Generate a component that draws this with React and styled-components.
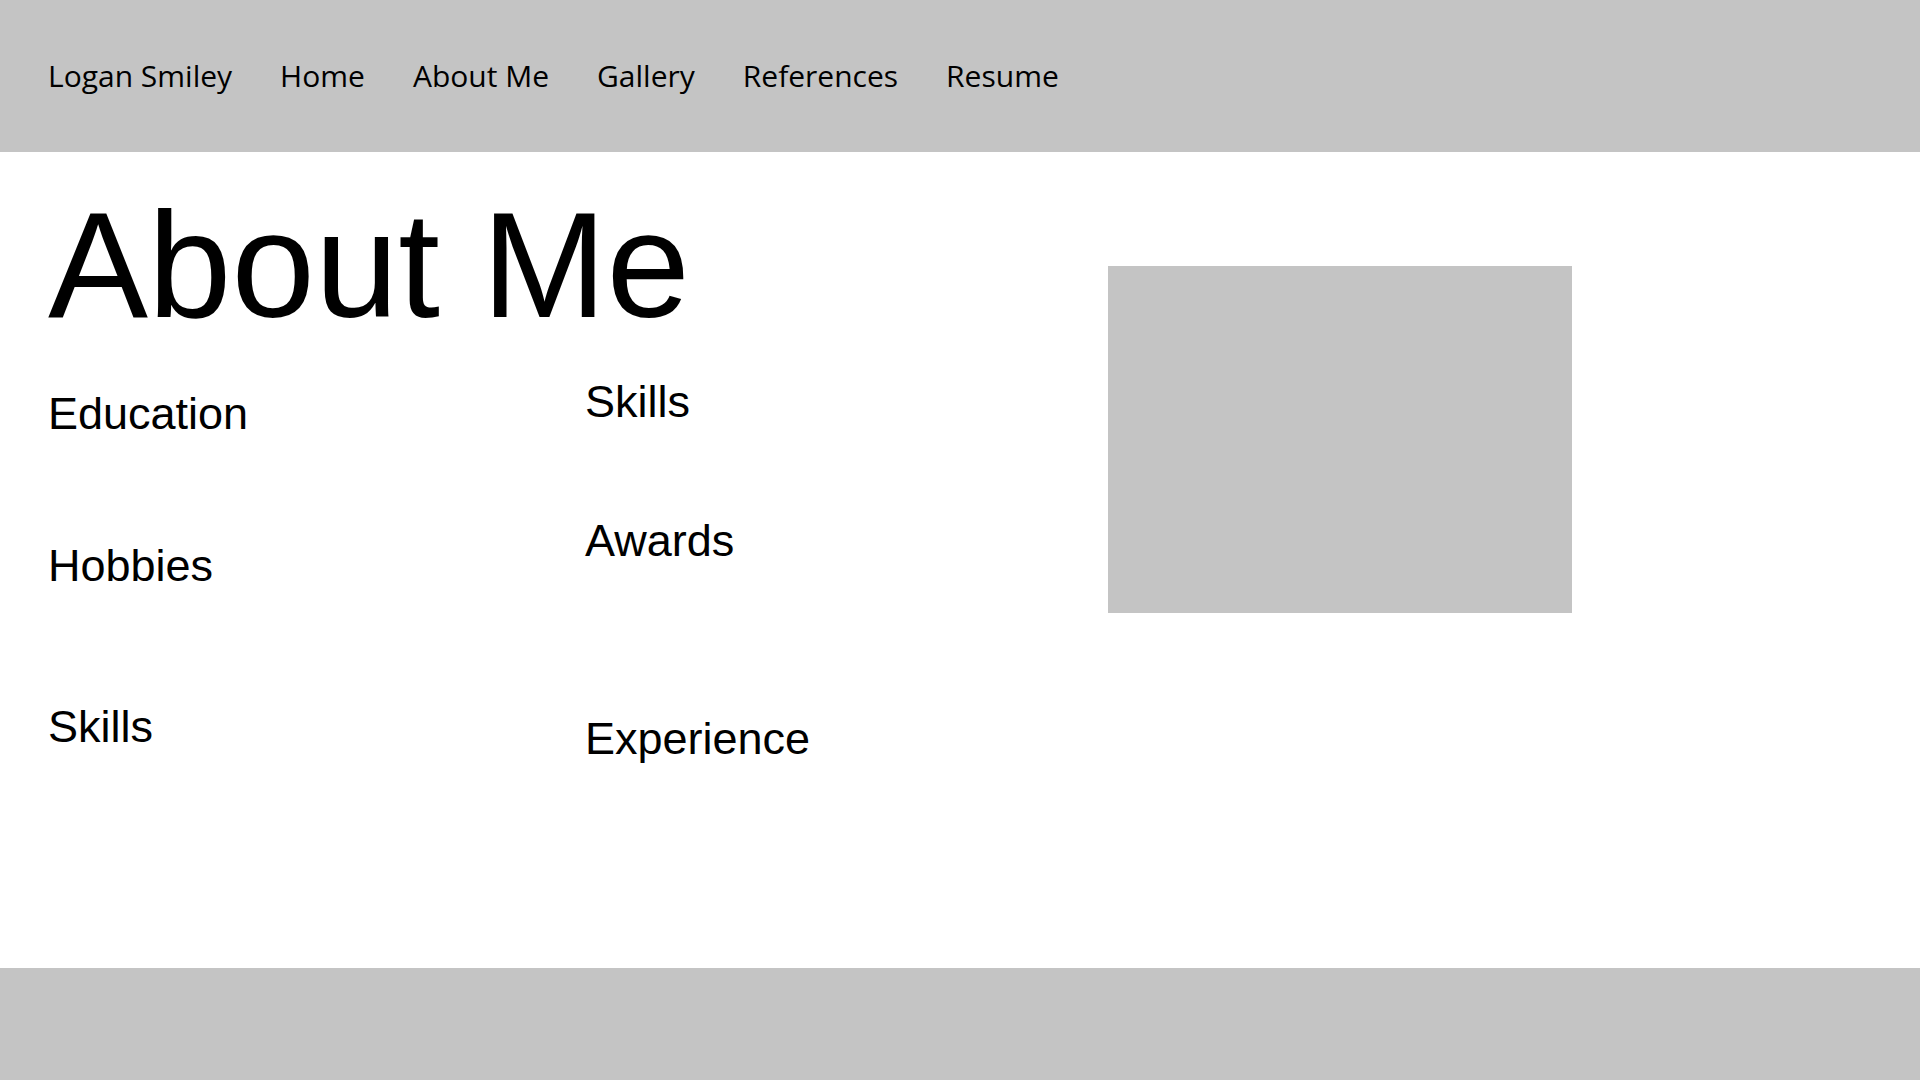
import React from "react";
import styled, { createGlobalStyle } from "styled-components";

const Global = createGlobalStyle`
  html, body { margin: 0; padding: 0; background: #ffffff; }
  body { font-family: "Liberation Sans", Arial, sans-serif; color: #000; }
  * { box-sizing: border-box; }
`;

const Page = styled.div`
  min-height: 100vh;
  display: flex;
  flex-direction: column;
`;

const Header = styled.header`
  height: 152px;
  background: #c4c4c4;
  display: flex;
  align-items: center;
  padding: 0 48px;
`;

const Nav = styled.nav`
  display: flex;
  align-items: center;
  gap: 48px;
`;

const NavLink = styled.a`
  font-family: "Open Sans", "Noto Sans", sans-serif;
  font-size: 30px;
  color: #000;
  text-decoration: none;
  line-height: 1;
`;

const Main = styled.main`
  flex: 1;
  display: flex;
  padding: 0 48px;
`;

const Content = styled.div`
  width: 1060px;
  display: flex;
  flex-direction: column;
`;

const Title = styled.h1`
  margin: 38px 0 0;
  font-family: "Liberation Sans", Arial, sans-serif;
  font-weight: 400;
  font-size: 150px;
  line-height: 150px;
`;

const Columns = styled.div`
  display: grid;
  grid-template-columns: 537px 1fr;
`;

const Column = styled.div`
  display: flex;
  flex-direction: column;
`;

const SectionTitle = styled.h2`
  margin: ${(p) => p.$top}px 0 0;
  font-family: "Liberation Sans", Arial, sans-serif;
  font-weight: 400;
  font-size: 45px;
  line-height: 45px;
`;

const Photo = styled.div`
  width: 464px;
  height: 347px;
  margin-top: 114px;
  background: #c4c4c4;
`;

const Footer = styled.footer`
  height: 112px;
  background: #c4c4c4;
`;

const navItems = ["Logan Smiley", "Home", "About Me", "Gallery", "References", "Resume"];

const leftSections = [
  { label: "Education", top: 51 },
  { label: "Hobbies", top: 107 },
  { label: "Skills", top: 116 },
];

const rightSections = [
  { label: "Skills", top: 39 },
  { label: "Awards", top: 94 },
  { label: "Experience", top: 153 },
];

export default function App() {
  return (
    <>
      <Global />
      <Page>
        <Header>
          <Nav>
            {navItems.map((item) => (
              <NavLink key={item} href="#">
                {item}
              </NavLink>
            ))}
          </Nav>
        </Header>
        <Main>
          <Content>
            <Title>About Me</Title>
            <Columns>
              <Column>
                {leftSections.map((s) => (
                  <SectionTitle key={s.label} $top={s.top}>
                    {s.label}
                  </SectionTitle>
                ))}
              </Column>
              <Column>
                {rightSections.map((s) => (
                  <SectionTitle key={s.label} $top={s.top}>
                    {s.label}
                  </SectionTitle>
                ))}
              </Column>
            </Columns>
          </Content>
          <Photo />
        </Main>
        <Footer />
      </Page>
    </>
  );
}
